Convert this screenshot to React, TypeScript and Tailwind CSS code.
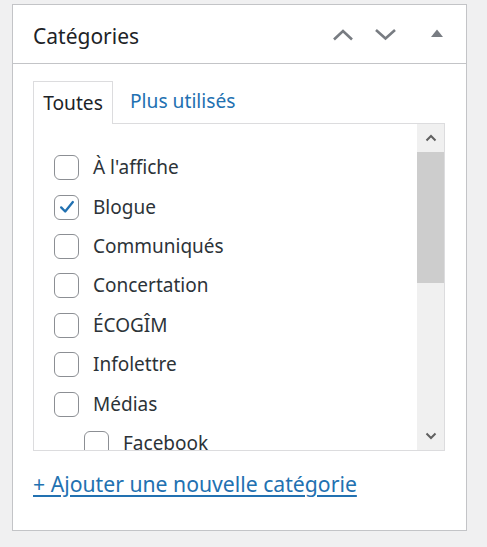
import React from 'react';

const items = [
  { label: "À l'affiche", checked: false, level: 0 },
  { label: 'Blogue', checked: true, level: 0 },
  { label: 'Communiqués', checked: false, level: 0 },
  { label: 'Concertation', checked: false, level: 0 },
  { label: 'ÉCOGÎM', checked: false, level: 0 },
  { label: 'Infolettre', checked: false, level: 0 },
  { label: 'Médias', checked: false, level: 0 },
  { label: 'Facebook', checked: false, level: 1 },
];

function Checkbox({ checked }: { checked: boolean }) {
  return (
    <span className="flex h-[25px] w-[25px] shrink-0 items-center justify-center rounded-[6px] border-[1.5px] border-[#8c8f94] bg-white">
      {checked && (
        <svg width="18" height="18" viewBox="0 0 20 20">
          <path d="M3.5 10.5 L8 15 L16.5 4.5" fill="none" stroke="#2271b1" strokeWidth="2.6" strokeLinecap="round" strokeLinejoin="round" />
        </svg>
      )}
    </span>
  );
}

export default function App() {
  return (
    <div className="min-h-[547px] bg-[#f0f0f1] pt-1 pl-3" style={{ fontFamily: '"Noto Sans", "Open Sans", sans-serif' }}>
      <div className="h-[527px] w-[455px] border border-[#c3c4c7] bg-white">
        {/* Header */}
        <div className="flex h-[59px] items-center border-b border-[#c3c4c7] pl-5 pr-[22px]">
          <h2 className="flex-1 pt-[4px] text-[21px] leading-none text-[#1d2327]">Catégories</h2>
          <div className="flex items-center text-[#787c82]">
            <svg width="22" height="13" viewBox="0 0 22 13">
              <path d="M2 11.5 L11 3 L20 11.5" fill="none" stroke="currentColor" strokeWidth="2.6" />
            </svg>
            <svg width="23" height="13" viewBox="0 0 23 13" className="ml-[20px]">
              <path d="M2 2 L11.5 10.5 L21 2" fill="none" stroke="currentColor" strokeWidth="2.6" />
            </svg>
            <svg width="14" height="10" viewBox="0 0 14 10" className="ml-[33px] -mt-[2px]">
              <path d="M1 9 L7 1.5 L13 9 Z" fill="currentColor" />
            </svg>
          </div>
        </div>

        {/* Body */}
        <div className="px-5 pt-4">
          <div className="flex items-end text-[19.2px]">
            <div className="relative z-10 -mb-px flex h-[43px] w-[80px] items-center justify-center border border-b-0 border-[#dcdcde] bg-white text-[#1d2327]">
              Toutes
            </div>
            <div className="flex h-[43px] items-center pl-[17px] text-[#2271b1]">Plus utilisés</div>
          </div>

          <div className="flex h-[328px] w-[412px] overflow-hidden border border-[#dcdcde]">
            <ul className="flex-1 overflow-hidden pt-[24px] pl-5 text-[19px] text-[#2c3338]">
              {items.map((it) => (
                <li
                  key={it.label}
                  className={`flex h-[39.4px] items-center gap-[14px] ${it.level ? 'pl-[30px]' : ''}`}
                >
                  <Checkbox checked={it.checked} />
                  <span className="leading-none">{it.label}</span>
                </li>
              ))}
            </ul>
            <div className="flex w-[27px] flex-col bg-[#f0f0f0]">
              <div className="flex h-[28px] items-center justify-center text-[#606060]">
                <svg width="12" height="8" viewBox="0 0 12 8">
                  <path d="M1.5 6.5 L6 2 L10.5 6.5" fill="none" stroke="currentColor" strokeWidth="2" />
                </svg>
              </div>
              <div className="h-[131px] bg-[#cdcdcd]" />
              <div className="flex-1" />
              <div className="flex h-[28px] items-center justify-center text-[#606060]">
                <svg width="12" height="8" viewBox="0 0 12 8">
                  <path d="M1.5 1.5 L6 6 L10.5 1.5" fill="none" stroke="currentColor" strokeWidth="2" />
                </svg>
              </div>
            </div>
          </div>

          <a href="#" className="mt-[20px] inline-block text-[21.2px] leading-tight text-[#2271b1] underline underline-offset-[3px]">
            + Ajouter une nouvelle catégorie
          </a>
        </div>
      </div>
    </div>
  );
}
